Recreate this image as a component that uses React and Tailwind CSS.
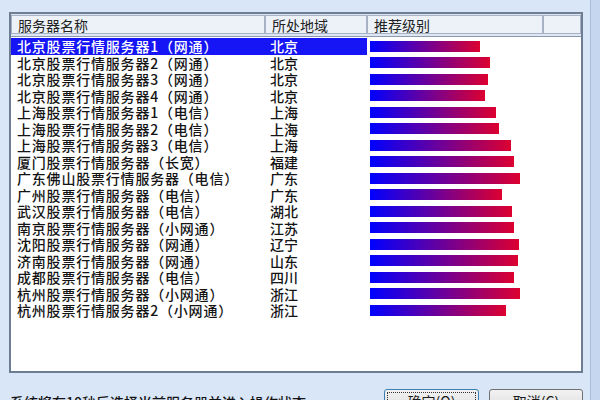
import React from 'react';

const rows = [
    { name: '北京股票行情服务器1（网通）', area: '北京', end: 480 },
    { name: '北京股票行情服务器2（网通）', area: '北京', end: 490 },
    { name: '北京股票行情服务器3（网通）', area: '北京', end: 488 },
    { name: '北京股票行情服务器4（网通）', area: '北京', end: 485 },
    { name: '上海股票行情服务器1（电信）', area: '上海', end: 496 },
    { name: '上海股票行情服务器2（电信）', area: '上海', end: 499 },
    { name: '上海股票行情服务器3（电信）', area: '上海', end: 511 },
    { name: '厦门股票行情服务器（长宽）', area: '福建', end: 514 },
    { name: '广东佛山股票行情服务器（电信）', area: '广东', end: 520 },
    { name: '广州股票行情服务器（电信）', area: '广东', end: 502 },
    { name: '武汉股票行情服务器（电信）', area: '湖北', end: 512 },
    { name: '南京股票行情服务器（小网通）', area: '江苏', end: 514 },
    { name: '沈阳股票行情服务器（网通）', area: '辽宁', end: 519 },
    { name: '济南股票行情服务器（网通）', area: '山东', end: 518 },
    { name: '成都股票行情服务器（电信）', area: '四川', end: 514 },
    { name: '杭州股票行情服务器（小网通）', area: '浙江', end: 520 },
    { name: '杭州股票行情服务器2（小网通）', area: '浙江', end: 506 },
];

const font = { fontFamily: '"Noto Sans CJK SC", "Liberation Sans", sans-serif' };

function HeaderCell({ label, className }) {
    return (
        <div className={`h-full flex items-center border border-[#a7b3c4] bg-[#edf2f9] pl-[6px] text-[14px] leading-[16px] text-[#222] ${className}`}>
            {label}
        </div>
    );
}

export default function App() {
    return (
        <div className="w-[600px] h-[400px] overflow-hidden flex bg-[#d9e6f8]" style={font}>
            <div className="flex-1 flex flex-col pt-[12px] pl-[9px] pr-[7px]">
                <div className="h-[361px] shrink-0 border-2 border-[#6d7d94] bg-white flex flex-col">
                    <div className="h-[23px] shrink-0 flex pt-[1px] pb-[2px] bg-[#dde6f2] border-b border-[#8c9ab0]">
                        <HeaderCell label="服务器名称" className="w-[254px]" />
                        <HeaderCell label="所处地域" className="w-[102px]" />
                        <HeaderCell label="推荐级别" className="w-[176px]" />
                        <HeaderCell label="" className="flex-1" />
                    </div>
                    <div className="pt-[1px]">
                        {rows.map((r, i) => (
                            <div key={i} className="h-[16.5px] flex items-center text-[14px] leading-[16px] font-medium">
                                <div className={`flex h-full items-center ${i === 0 ? 'bg-[#1515f5] text-white' : 'text-[#141414]'}`}>
                                    <div className="w-[254px] pl-[6px] whitespace-nowrap tracking-[0.8px]">{r.name}</div>
                                    <div className="w-[102px] pl-[5px]">{r.area}</div>
                                </div>
                                <div className="w-[176px] pl-[3px] h-full flex items-center">
                                    <div
                                        className="h-[11px] bg-linear-to-r/srgb from-[#0000ff] to-[#dc0030]"
                                        style={{ width: r.end - 370 }}
                                    />
                                </div>
                            </div>
                        ))}
                    </div>
                </div>
                <div className="flex items-start mt-[16px] pl-[1px]">
                    <div className="text-[14px] leading-[16px] font-medium text-[#141414] mt-[5px] whitespace-nowrap">
                        系统将在10秒后选择当前服务器并进入操作状态
                    </div>
                    <div className="ml-auto flex gap-[10px]">
                        <button className="w-[95px] h-[24px] rounded-[3px] border border-[#3c7fb1] bg-gradient-to-b from-[#f2f2f2] to-[#dcdcdc] p-[2px]">
                            <div className="h-full border border-dotted border-[#333] flex items-center justify-center text-[14px] text-[#1c1c1c]">
                                确定(O)
                            </div>
                        </button>
                        <button className="w-[94px] h-[24px] rounded-[3px] border border-[#707070] bg-gradient-to-b from-[#f2f2f2] to-[#dcdcdc] flex items-center justify-center text-[14px] text-[#1c1c1c]">
                            取消(C)
                        </button>
                    </div>
                </div>
            </div>
            <div className="w-[10px] bg-[#c5d6ee] border-l border-[#a9bcd8]" />
        </div>
    );
}
